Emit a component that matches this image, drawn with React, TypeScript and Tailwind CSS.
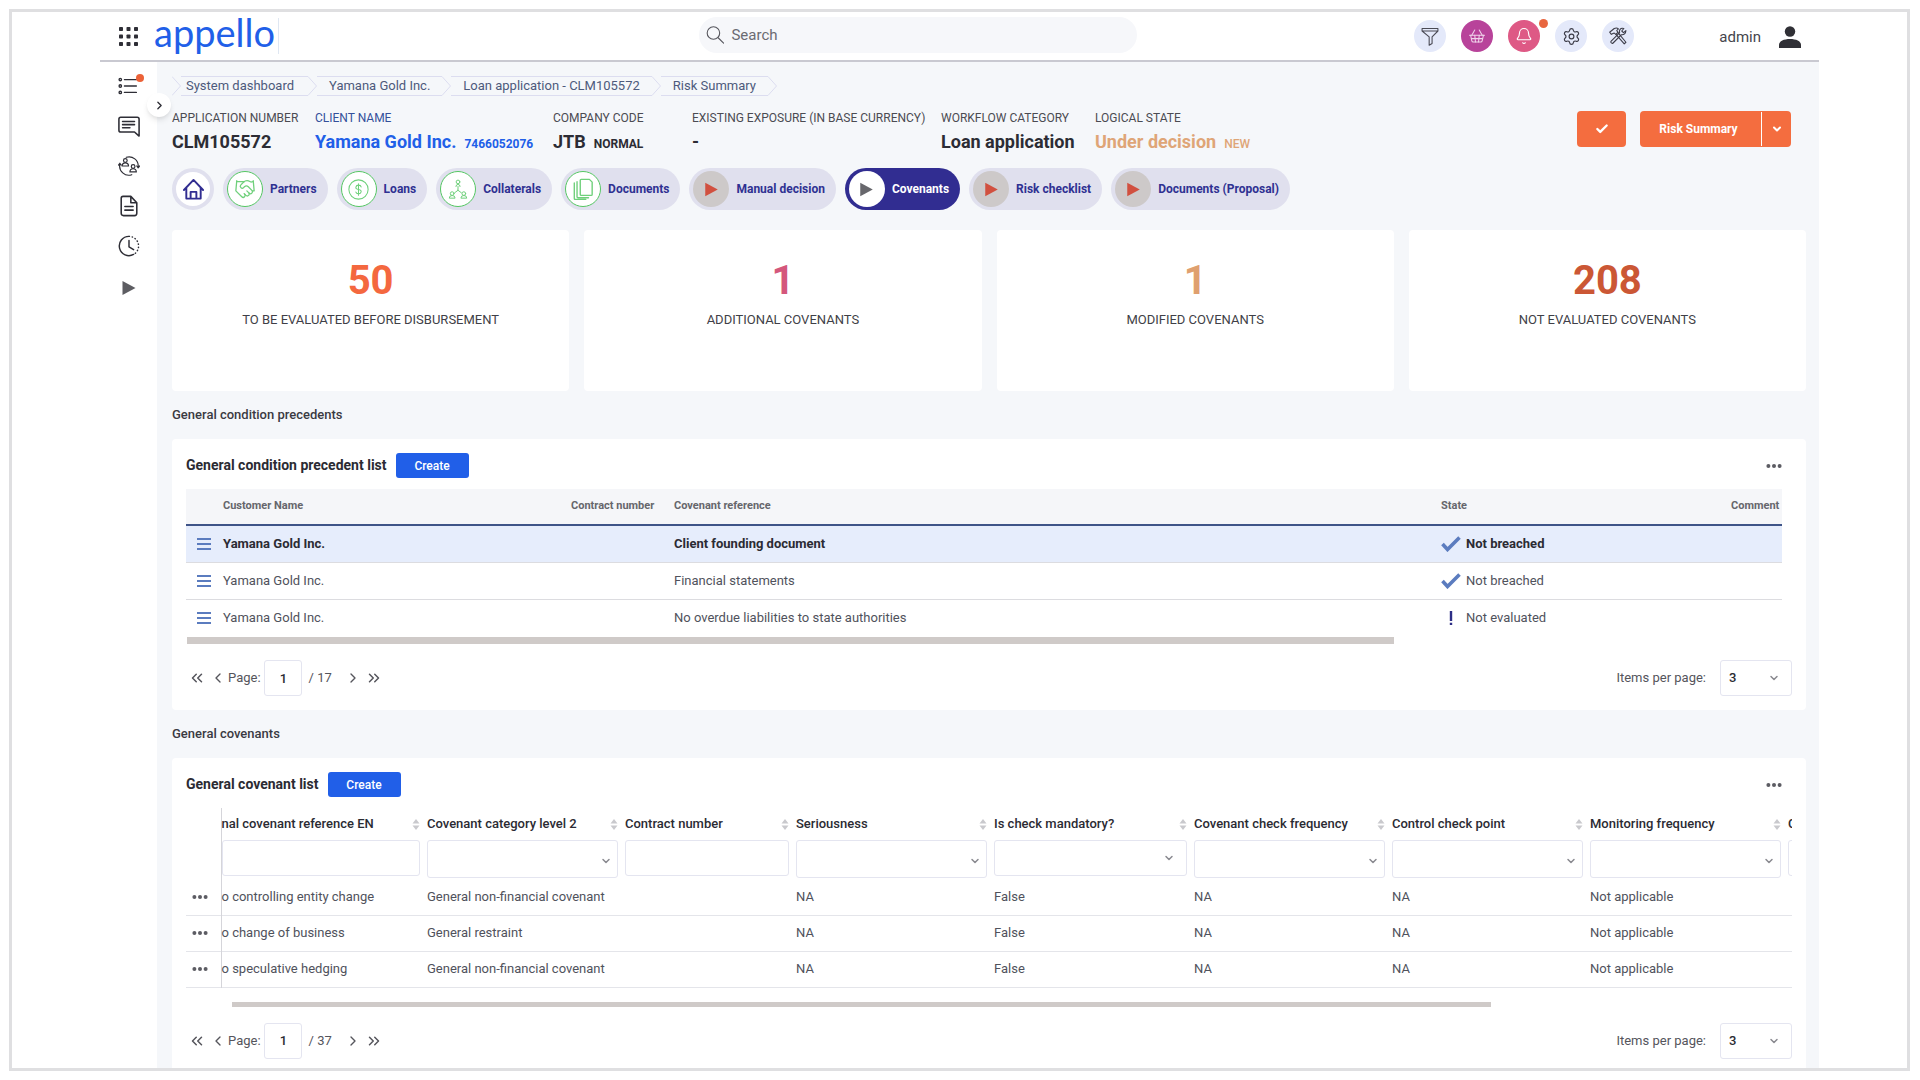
import type { ReactNode } from 'react'
import {
  Bell,
  Check,
  ChevronDown,
  ChevronLeft,
  ChevronRight,
  ChevronsLeft,
  ChevronsRight,
  Handshake,
  Settings,
  ShoppingBasket,
} from 'lucide-react'
import { clsx } from 'clsx'

const CRUMBS = ['System dashboard', 'Yamana Gold Inc.', 'Loan application - CLM105572', 'Risk Summary']

type Tone = 'dark' | 'link' | 'sand'

type Fact = { label: string; value: string; note?: string; tone: Tone; width: string }

const FACTS: Fact[] = [
  { label: 'Application number', value: 'CLM105572', tone: 'dark', width: 'w-[143px]' },
  { label: 'Client name', value: 'Yamana Gold Inc.', note: '7466052076', tone: 'link', width: 'w-[238px]' },
  { label: 'Company code', value: 'JTB', note: 'NORMAL', tone: 'dark', width: 'w-[139px]' },
  { label: 'Existing exposure (in base currency)', value: '-', tone: 'dark', width: 'w-[249px]' },
  { label: 'Workflow category', value: 'Loan application', tone: 'dark', width: 'w-[154px]' },
  { label: 'Logical state', value: 'Under decision', note: 'NEW', tone: 'sand', width: 'w-[170px]' },
]

const STATS = [
  { value: '50', label: 'To be evaluated before disbursement', color: 'text-[#f4683f]' },
  { value: '1', label: 'Additional covenants', color: 'text-[#d4577c]' },
  { value: '1', label: 'Modified covenants', color: 'text-[#dfa06f]' },
  { value: '208', label: 'Not evaluated covenants', color: 'text-[#cb5735]' },
]

const PRECEDENTS = [
  { customer: 'Yamana Gold Inc.', reference: 'Client founding document', state: 'Not breached', ok: true },
  { customer: 'Yamana Gold Inc.', reference: 'Financial statements', state: 'Not breached', ok: true },
  { customer: 'Yamana Gold Inc.', reference: 'No overdue liabilities to state authorities', state: 'Not evaluated', ok: false },
]

type Column = { title: string; filter: 'text' | 'select' | 'flag'; width: string }

const COLUMNS: Column[] = [
  { title: 'nal covenant reference EN', filter: 'text', width: 'w-[206px]' },
  { title: 'Covenant category level 2', filter: 'select', width: 'w-[198px]' },
  { title: 'Contract number', filter: 'text', width: 'w-[171px]' },
  { title: 'Seriousness', filter: 'select', width: 'w-[198px]' },
  { title: 'Is check mandatory?', filter: 'flag', width: 'w-[200px]' },
  { title: 'Covenant check frequency', filter: 'select', width: 'w-[198px]' },
  { title: 'Control check point', filter: 'select', width: 'w-[198px]' },
  { title: 'Monitoring frequency', filter: 'select', width: 'w-[198px]' },
  { title: 'C', filter: 'text', width: 'w-[198px]' },
]

const COVENANTS = [
  ['o controlling entity change', 'General non-financial covenant', '', 'NA', 'False', 'NA', 'NA', 'Not applicable', ''],
  ['o change of business', 'General restraint', '', 'NA', 'False', 'NA', 'NA', 'Not applicable', ''],
  ['o speculative hedging', 'General non-financial covenant', '', 'NA', 'False', 'NA', 'NA', 'Not applicable', ''],
]

function Line({ size = 22, width = 1.3, children }: { size?: number; width?: number; children: ReactNode }) {
  return (
    <svg
      width={size}
      height={size}
      viewBox="0 0 24 24"
      fill="none"
      stroke="currentColor"
      strokeWidth={width}
      strokeLinecap="round"
      strokeLinejoin="round"
      aria-hidden="true"
    >
      {children}
    </svg>
  )
}

function PlayGlyph({ className, size = 26 }: { className?: string; size?: number }) {
  return (
    <svg width={size} height={size} viewBox="0 0 24 24" className={className} aria-hidden="true">
      <path d="M6 5.500v13l12-6.500z" fill="currentColor" />
    </svg>
  )
}

function Dots() {
  return (
    <svg width="16" height="6" viewBox="0 0 16 6" fill="#5c5c63" aria-hidden="true">
      <circle cx="2.4" cy="3" r="2" />
      <circle cx="8" cy="3" r="2" />
      <circle cx="13.6" cy="3" r="2" />
    </svg>
  )
}

function Header() {
  return (
    <header className="relative z-10 flex h-[50px] shrink-0 items-center border-b-2 border-[#c9c9d1] bg-white pl-[19px] pr-[18px]">
      <button type="button" aria-label="Applications" className="shrink-0">
        <svg width="19" height="19" viewBox="0 0 19 19" fill="#2e2e36">
          {[0, 7.5, 15].map((y) =>
            [0, 7.5, 15].map((x) => <rect key={`${x}-${y}`} x={x} y={y} width="4" height="4" rx="0.8" />)
          )}
        </svg>
      </button>
      <a
        href="#home"
        className="ml-4 flex h-9 w-[125px] items-center border-r border-[#dfe7f2] font-['Lato',sans-serif] text-[38px] leading-9 text-[#215fe8]"
      >
        <span className="-mt-2 leading-[46px]">appello</span>
      </a>
      <div className="flex flex-1 justify-center pl-[142px]">
        <label className="mb-0.5 flex h-9 w-[438px] items-center gap-[7px] rounded-full bg-[#f6f7fa] px-[7px] text-[#55555c]">
          <Line size={20} width={1.4}>
            <circle cx="9.5" cy="9.5" r="8" />
            <path d="M15.5 15.5 22.5 22.5" />
          </Line>
          <input
            type="search"
            aria-label="Search"
            placeholder="Search"
            className="w-full bg-transparent text-[15px] outline-none placeholder:text-[#6b6b72]"
          />
        </label>
      </div>
      <div className="flex items-center gap-[15px]">
        <RoundButton label="Filter" tone="bg-[#e4e9fa] text-[#4a4a55]">
          <Line size={20}>
            <path d="M2.5 3h19v3l-7 7v8l-3.5 2V13L2.5 6zM2.5 6h19" />
          </Line>
        </RoundButton>
        <RoundButton label="Basket" tone="bg-[#b8439a] text-[#efd3ea]">
          <ShoppingBasket size={18} strokeWidth={1.4} />
        </RoundButton>
        <RoundButton label="Notifications" tone="bg-[#de5985] text-white" alert>
          <Bell size={18} strokeWidth={1.5} />
        </RoundButton>
        <RoundButton label="Settings" tone="bg-[#e4e9fa] text-[#3c3c48]">
          <Settings size={19} strokeWidth={1.5} />
        </RoundButton>
        <RoundButton label="Tools" tone="bg-[#e4e9fa] text-[#3c3c48]">
          <Line size={20}>
            <path d="M2 7.5 7.5 3q3-1.500 5 .5L10.500 5.500l1.500 2-2.500 2.500-2-1.500L4 10z" />
            <path d="m9.500 10 10 11.500 2-2L12 8" />
            <path d="M21.500 5.500 18.500 8l-2-2L19 3q-3-1-4.500 1t-.5 4L3.500 18.500q-.5 2 2 2.500L16 10.500q5 .5 5.500-5z" />
          </Line>
        </RoundButton>
      </div>
      <button type="button" className="ml-[85px] flex items-center gap-[18px] pt-0.5 text-[15px] text-[#45454c]">
        admin
        <svg width="22" height="22" viewBox="0 0 22 22" fill="#303036" aria-hidden="true">
          <circle cx="11" cy="5.500" r="5.200" />
          <path d="M0 22v-3c0-4 5-6 11-6s11 2 11 6v3z" />
        </svg>
      </button>
    </header>
  )
}

function RoundButton({ label, tone, alert, children }: { label: string; tone: string; alert?: boolean; children: ReactNode }) {
  return (
    <button
      type="button"
      aria-label={label}
      className={clsx('relative flex size-8 items-center justify-center rounded-full', tone)}
    >
      {children}
      {alert && <span className="absolute -right-2 -top-px size-[9px] rounded-full bg-[#e8663f]" />}
    </button>
  )
}

function Sidebar() {
  return (
    <nav className="relative flex w-[57px] shrink-0 flex-col items-center gap-[18px] bg-white pt-[13px] text-[#2e2e36]">
      <a href="#tasks" aria-label="Tasks" className="relative">
        <Line width={1.5}>
          <path d="M7 5h13M7 12h13M7 19h13" />
          <circle cx="2.500" cy="5" r="1.300" />
          <circle cx="2.500" cy="12" r="1.300" />
          <circle cx="2.500" cy="19" r="1.300" />
        </Line>
        <span className="absolute -right-1 -top-px size-2 rounded-full bg-[#ec6238]" />
      </a>
      <a href="#messages" aria-label="Messages">
        <Line width={1.7}>
          <path d="M3 2.500h18q2 0 2 2V23l-5-4.500H3q-2 0-2-2v-12q0-2 2-2z" />
          <path d="M5 7h13M5 10.500h13M5 14h8" />
        </Line>
      </a>
      <a href="#partners" aria-label="Partners">
        <Line width={1.3}>
          <path d="M9 2.500a10 10 0 0 1 13 10.500M15 21.500A10 10 0 0 1 2 10M.5 11 2 9l1.500 2M20.500 12l1.500 2 1.500-2" />
          <circle cx="8" cy="6" r="2" />
          <path d="M4.500 12q0-3.500 3.500-3.500t3.500 3.500z" />
          <circle cx="16.500" cy="12.500" r="2" />
          <path d="M13 18.500q0-3.500 3.500-3.500t3.500 3.500z" />
        </Line>
      </a>
      <a href="#documents" aria-label="Documents">
        <Line width={1.7}>
          <path d="M5.500 1.500H14l6.500 7V20q0 2.500-2.500 2.500H6Q3.500 22.500 3.500 20V3.500q0-2 2-2zM14 1.500v7h6.500" />
          <path d="M7.500 12.500h9M7.500 16.500h9" />
        </Line>
      </a>
      <a href="#history" aria-label="History">
        <Line width={1.6}>
          <path d="M12 1.500a10.500 10.500 0 1 0 5 19.700M12 6v7l5 3" />
          <path d="M12 1.500a10.500 10.500 0 0 1 5 19.700" strokeDasharray="0.500 3" />
        </Line>
      </a>
      <a href="#run" aria-label="Run">
        <PlayGlyph className="text-[#5d5d62]" />
      </a>
      <button
        type="button"
        aria-label="Expand menu"
        className="absolute -right-[14px] top-[31px] flex size-6 items-center justify-center rounded-full bg-white shadow-md"
      >
        <ChevronRight size={13} strokeWidth={2.500} />
      </button>
    </nav>
  )
}

function Breadcrumbs() {
  return (
    <nav aria-label="Breadcrumb" className="flex h-5 text-[13px] leading-5 text-[#4d5a7c]">
      {CRUMBS.map((crumb, i) => (
        <div key={crumb} className="flex">
          <svg width="9" height="20" viewBox="0 0 9 20" fill="none" stroke="#dcddf0" aria-hidden="true">
            <path d="M0 .5 8.500 10 0 19.500" />
          </svg>
          <a
            href="#crumb"
            className={clsx('border-y border-[#dcddf0] leading-[18px]', i === 0 ? 'pl-[5px] pr-[14px]' : 'px-3')}
          >
            {crumb}
          </a>
        </div>
      ))}
      <svg width="9" height="20" viewBox="0 0 9 20" fill="none" stroke="#dcddf0" aria-hidden="true">
        <path d="M0 .5 8.500 10 0 19.500" />
      </svg>
    </nav>
  )
}

function Facts() {
  return (
    <dl className="flex">
      {FACTS.map(({ label, value, note, tone, width }) => (
        <div
          key={label}
          className={clsx(
            'shrink-0 whitespace-nowrap',
            width,
            tone === 'dark' && 'text-[#2c2c34]',
            tone === 'link' && 'text-[#215fe8]',
            tone === 'sand' && 'text-[#dfa577]'
          )}
        >
          <dt className={clsx('text-[12px] uppercase leading-4', tone === 'link' ? 'text-[#33509a]' : 'text-[#4b4b52]')}>
            {label}
          </dt>
          <dd className="mt-1 text-[18px] font-bold leading-6">
            {value}
            {note && <span className={clsx('ml-2 text-[12px]', tone === 'sand' ? 'font-medium' : 'font-bold')}>{note}</span>}
          </dd>
        </div>
      ))}
    </dl>
  )
}

type TabProps = { label: string; look: 'green' | 'play' | 'active'; children?: ReactNode }

function Tab({ label, look, children }: TabProps) {
  return (
    <a
      href="#tab"
      className={clsx(
        'flex h-[42px] items-center gap-[7px] rounded-full pl-1 pr-[11px] text-[12px] font-bold',
        look === 'active' ? 'bg-[#312d91] text-white' : 'bg-[#e0e0ee] text-[#2f3192]'
      )}
    >
      <span
        className={clsx(
          'flex size-9 items-center justify-center rounded-full',
          look === 'green' && 'border border-[#55c763] bg-white text-[#6fd07b]',
          look === 'play' && 'bg-[#cdc9c9] text-[#d1503f]',
          look === 'active' && 'bg-white text-[#67676c]'
        )}
      >
        {children ?? <PlayGlyph size={25} />}
      </span>
      {label}
    </a>
  )
}

function Tabs() {
  return (
    <nav aria-label="Sections" className="flex gap-[9px]">
      <a
        href="#home"
        aria-label="Home"
        className="flex size-[42px] items-center justify-center rounded-full border-4 border-[#e0e0ee] bg-white text-[#312d91]"
      >
        <Line size={23} width={2}>
          <path d="M2 12.500 12 2l10 10.500M4.500 10.500V21.500h15V10.500M9 21.500v-7h6v7" />
        </Line>
      </a>
      <Tab label="Partners" look="green">
        <Handshake size={22} strokeWidth={1.400} />
      </Tab>
      <Tab label="Loans" look="green">
        <Line size={21} width={1.200}>
          <circle cx="12" cy="12" r="11" />
          <path d="M15 9q-.5-2-3-2t-3 2.200 3 2.800 3 2.800-3 2.200-3-2M12 5.500v13" />
        </Line>
      </Tab>
      <Tab label="Collaterals" look="green">
        <Line size={20} width={1.200}>
          <circle cx="12" cy="3.500" r="2.200" />
          <path d="M9.500 9q0-2.500 2.500-2.500T14.500 9M12 9v4.500l-4 3M12 13.500l4 3" />
          <circle cx="5" cy="17.500" r="2.200" />
          <circle cx="19" cy="17.500" r="2.200" />
          <path d="M1.500 22.500q0-2.700 3.500-2.700t3.500 2.700zM15.500 22.500q0-2.700 3.500-2.700t3.500 2.700z" />
        </Line>
      </Tab>
      <Tab label="Documents" look="green">
        <Line size={22} width={1.500}>
          <path d="M10 1.500h9l3 3V18q0 1-1 1H10q-1 0-1-1V2.500q0-1 1-1zM5.500 4v16.500q0 1 1 1H18M2.500 5.500V22q0 1.500 1.500 1.500h11" />
        </Line>
      </Tab>
      <Tab label="Manual decision" look="play" />
      <Tab label="Covenants" look="active" />
      <Tab label="Risk checklist" look="play" />
      <Tab label="Documents (Proposal)" look="play" />
    </nav>
  )
}

function Panel({ title, children }: { title: string; children: ReactNode }) {
  return (
    <section className="rounded bg-white px-[14px] pb-[14px] pt-[14px]">
      <div className="flex h-[25px] items-center gap-[9px]">
        <h2 className="text-[14px] font-bold text-[#2b2b33]">{title}</h2>
        <button type="button" className="h-[25px] w-[73px] rounded-[3px] bg-[#215fe8] text-[12px] font-medium text-white">
          Create
        </button>
        <button type="button" aria-label="More options" className="ml-auto mr-[10px]">
          <Dots />
        </button>
      </div>
      {children}
    </section>
  )
}

function Pager({ id, pages }: { id: string; pages: number }) {
  return (
    <div className="flex h-9 items-center text-[13px] text-[#55555c]">
      <button type="button" aria-label="First page" className="ml-0.5">
        <ChevronsLeft size={18} strokeWidth={2} />
      </button>
      <button type="button" aria-label="Previous page" className="ml-1">
        <ChevronLeft size={16} strokeWidth={2} />
      </button>
      <label htmlFor={`${id}-page`} className="ml-0.5">
        Page:
      </label>
      <input
        id={`${id}-page`}
        defaultValue="1"
        className="ml-[3px] h-9 w-[38px] rounded-[3px] border border-[#e4e5f0] pl-0.5 text-center text-[13px] font-medium text-[#2b2b33]"
      />
      <span className="ml-[7px]">/ {pages}</span>
      <button type="button" aria-label="Next page" className="ml-[13px]">
        <ChevronRight size={16} strokeWidth={2} />
      </button>
      <button type="button" aria-label="Last page" className="ml-1">
        <ChevronsRight size={18} strokeWidth={2} />
      </button>
      <label htmlFor={`${id}-size`} className="ml-auto">
        Items per page:
      </label>
      <div className="relative ml-[14px]">
        <select
          id={`${id}-size`}
          className="h-9 w-[72px] appearance-none rounded-[3px] border border-[#e4e5f0] bg-white pl-2 text-[13px] font-medium text-[#2b2b33]"
        >
          <option>3</option>
          <option>10</option>
        </select>
        <ChevronDown size={12} strokeWidth={3} className="pointer-events-none absolute right-3 top-3 text-[#8a8a90]" />
      </div>
    </div>
  )
}

function PrecedentTable() {
  return (
    <div className="mr-[10px]">
      <table className="mt-[11px] w-full table-fixed border-collapse text-left text-[13px] text-[#50525c]">
        <thead>
          <tr className="h-9 border-b-2 border-[#3f5488] bg-[#f5f6f9] text-[11px] text-[#66666c]">
            <th className="w-[37px]" />
            <th className="w-[348px] font-bold">Customer Name</th>
            <th className="w-[103px] font-bold">Contract number</th>
            <th className="font-bold">Covenant reference</th>
            <th className="w-[290px] font-bold">State</th>
            <th className="w-[51px] font-bold">Comment</th>
          </tr>
        </thead>
        <tbody>
          {PRECEDENTS.map((row, i) => (
            <tr
              key={row.reference}
              className={clsx(
                'h-[37px]',
                i === 0 && 'bg-[#e6edfc] font-bold text-[#2b2b33]',
                i < PRECEDENTS.length - 1 && 'border-b border-[#dcdce0]'
              )}
            >
              <td className="pl-[11px]">
                <button type="button" aria-label="Row menu" className="flex flex-col gap-[3px]">
                  <span className="h-0.5 w-[14px] bg-[#5b7cbf]" />
                  <span className="h-0.5 w-[14px] bg-[#5b7cbf]" />
                  <span className="h-0.5 w-[14px] bg-[#5b7cbf]" />
                </button>
              </td>
              <td>{row.customer}</td>
              <td />
              <td>{row.reference}</td>
              <td>
                <span className="flex items-center gap-[5px]">
                  {row.ok ? (
                    <svg width="20" height="16" viewBox="0 0 20 16" fill="none" stroke="#5b7cbf" strokeWidth="3.600" aria-hidden="true">
                      <path d="m1.500 8 5 5.500L18.500 1.500" />
                    </svg>
                  ) : (
                    <svg width="20" height="16" viewBox="0 0 20 16" fill="#2d2e86" aria-hidden="true">
                      <path d="M8.800 1h2.400v10H8.800zM8.800 12.800h2.400V15H8.800z" />
                    </svg>
                  )}
                  {row.state}
                </span>
              </td>
              <td />
            </tr>
          ))}
        </tbody>
      </table>
      <div className="ml-px mt-px h-[7px] w-[75.6%] bg-[#cfcac8]" />
    </div>
  )
}

function SortMark() {
  return (
    <svg width="8" height="11" viewBox="0 0 8 11" fill="#c9c9cd" aria-hidden="true">
      <path d="M4 0l3.500 4.500h-7zM4 11 .5 6.500h7z" />
    </svg>
  )
}

function ColumnFilter({ column }: { column: Column }) {
  const box = 'w-full rounded-[3px] border border-[#e4e5f0] bg-white'
  if (column.filter === 'text') {
    return <input aria-label={`Filter ${column.title}`} className={clsx(box, 'block h-9')} />
  }
  return (
    <div className="relative">
      <select
        aria-label={`Filter ${column.title}`}
        className={clsx(box, 'block appearance-none', column.filter === 'flag' ? 'h-9' : 'h-[38px]')}
      />
      <ChevronDown
        size={12}
        strokeWidth={3}
        className={clsx(
          'pointer-events-none absolute text-[#8a8a90]',
          column.filter === 'flag' ? 'right-3 top-3' : 'right-[6px] top-[15px]'
        )}
      />
    </div>
  )
}

function CovenantTable() {
  return (
    <div className="mt-[11px] overflow-hidden">
      <table className="w-full table-fixed border-collapse text-left text-[13px] text-[#50525c]">
        <thead className="text-[#2b2b33]">
          <tr className="h-8">
            <th className="w-[35px] border-r border-[#d5d5da]" />
            {COLUMNS.map((column) => (
              <th key={column.title} className={clsx('whitespace-nowrap pr-[7px] font-medium', column.width)}>
                <div className="flex items-center justify-between">
                  {column.title}
                  <SortMark />
                </div>
              </th>
            ))}
          </tr>
          <tr className="h-[39px]">
            <td className="border-r border-[#d5d5da]" />
            {COLUMNS.map((column) => (
              <td key={column.title} className="pr-[7px] align-top">
                <ColumnFilter column={column} />
              </td>
            ))}
          </tr>
        </thead>
        <tbody>
          {COVENANTS.map((row) => (
            <tr key={row[0]} className="h-9 border-b border-[#e4e5ea]">
              <td className="border-r border-[#d5d5da] pl-[6px]">
                <button type="button" aria-label="Row menu" className="flex">
                  <Dots />
                </button>
              </td>
              {row.map((cell, i) => (
                <td key={i} className="whitespace-nowrap">
                  {cell}
                </td>
              ))}
            </tr>
          ))}
        </tbody>
      </table>
      <div className="ml-[46px] mt-[14px] h-[5px] w-[78.4%] bg-[#cfcac8]" />
    </div>
  )
}

export default function App() {
  return (
    <div className="h-screen bg-white p-[9px] pr-[10px] font-['Roboto',sans-serif]">
      <div className="flex h-full flex-col overflow-hidden border-[3px] border-[#dfdfe1] px-[88px]">
        <Header />
        <div className="flex min-h-0 flex-1">
          <Sidebar />
          <main className="min-w-0 flex-1 overflow-hidden bg-[#f5f7fa] pl-[15px] pr-[13px] pt-[14px]">
            <Breadcrumbs />
            <div className="mt-[14px] flex items-start justify-between">
              <Facts />
              <div className="mr-[15px] mt-px flex gap-[14px]">
                <button type="button" aria-label="Confirm" className="flex h-9 w-[49px] items-center justify-center rounded bg-[#f46d3f] text-white">
                  <Check size={14} strokeWidth={4} />
                </button>
                <div className="flex h-9 rounded bg-[#f46d3f] text-[12px] font-bold text-white">
                  <button type="button" className="w-[121px] pr-1">
                    Risk Summary
                  </button>
                  <button
                    type="button"
                    aria-label="More actions"
                    className="my-px flex w-[30px] items-center justify-center border-l border-white"
                  >
                    <ChevronDown size={12} strokeWidth={4} />
                  </button>
                </div>
              </div>
            </div>
            <div className="mt-3">
              <Tabs />
            </div>
            <div className="mt-5 grid grid-cols-4 gap-[15px]">
              {STATS.map((stat) => (
                <div key={stat.label} className="h-[161px] rounded bg-white pt-[27px] text-center">
                  <p className={clsx('text-[40px] font-bold leading-[48px]', stat.color)}>{stat.value}</p>
                  <p className="mt-[7px] text-[13px] uppercase leading-4 text-[#3f3f47]">{stat.label}</p>
                </div>
              ))}
            </div>
            <h1 className="flex h-12 items-center text-[13px] font-medium text-[#3a3a42]">General condition precedents</h1>
            <Panel title="General condition precedent list">
              <PrecedentTable />
              <div className="mt-4">
                <Pager id="precedents" pages={17} />
              </div>
            </Panel>
            <h1 className="flex h-12 items-center text-[13px] font-medium text-[#3a3a42]">General covenants</h1>
            <Panel title="General covenant list">
              <CovenantTable />
              <div className="mt-4">
                <Pager id="covenants" pages={37} />
              </div>
            </Panel>
          </main>
        </div>
      </div>
    </div>
  )
}
